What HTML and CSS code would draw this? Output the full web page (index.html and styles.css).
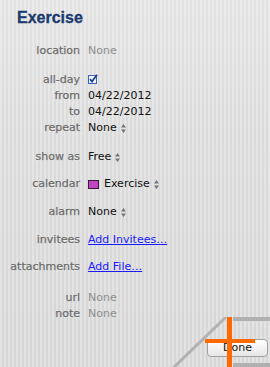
FILE: index.html
```
<!DOCTYPE html>
<html>
<head>
<meta charset="utf-8">
<link rel="stylesheet" href="styles.css">
</head>
<body>
<div class="panel">
  <h1 class="title">Exercise</h1>
  <div class="rows">
    <div class="row"><span class="label">location</span><span class="value muted">None</span></div>
    <div class="row sp13"><span class="label">all-day</span><span class="value"><svg class="check" width="10" height="10" viewBox="0 0 10 10"><rect x="0.5" y="1.5" width="8" height="8" fill="#eef3fb" stroke="#3d64b8"/><path d="M2 5.2 L4 7.6 L9 0.8" fill="none" stroke="#1d3f9a" stroke-width="1.8"/></svg></span></div>
    <div class="row"><span class="label">from</span><span class="value">04/22/2012</span></div>
    <div class="row"><span class="label">to</span><span class="value">04/22/2012</span></div>
    <div class="row"><span class="label">repeat</span><span class="value">None<svg class="step" width="5" height="9" viewBox="0 0 5 9"><path d="M2.5 0 L5 3.5 L0 3.5 Z M2.5 9 L5 5.5 L0 5.5 Z" fill="#777"/></svg></span></div>
    <div class="row sp13"><span class="label">show as</span><span class="value">Free<svg class="step" width="5" height="9" viewBox="0 0 5 9"><path d="M2.5 0 L5 3.5 L0 3.5 Z M2.5 9 L5 5.5 L0 5.5 Z" fill="#777"/></svg></span></div>
    <div class="row sp11"><span class="label">calendar</span><span class="value"><span class="swatch"></span>Exercise<svg class="step" width="5" height="9" viewBox="0 0 5 9"><path d="M2.5 0 L5 3.5 L0 3.5 Z M2.5 9 L5 5.5 L0 5.5 Z" fill="#777"/></svg></span></div>
    <div class="row sp12"><span class="label">alarm</span><span class="value">None<svg class="step" width="5" height="9" viewBox="0 0 5 9"><path d="M2.5 0 L5 3.5 L0 3.5 Z M2.5 9 L5 5.5 L0 5.5 Z" fill="#777"/></svg></span></div>
    <div class="row sp12"><span class="label">invitees</span><span class="value"><a class="link" href="#">Add Invitees…</a></span></div>
    <div class="row sp11"><span class="label">attachments</span><span class="value"><a class="link" href="#">Add File…</a></span></div>
    <div class="row sp15"><span class="label">url</span><span class="value muted">None</span></div>
    <div class="row"><span class="label">note</span><span class="value muted">None</span></div>
  </div>
</div>
<svg class="corner" width="100" height="52" viewBox="0 0 100 52">
  <line x1="56" y1="0" x2="0" y2="54" stroke="#b2b2b2" stroke-width="3"/>
  <rect x="63" y="0" width="37" height="4" fill="#b0b0b0"/>
  <rect x="63" y="46" width="37" height="6" fill="#b0b0b0"/>
</svg>
<button class="done">Done</button>
<svg class="cross" width="52" height="52" viewBox="0 0 52 52">
  <rect x="22" y="0" width="5" height="52" fill="#ff6a00"/>
  <rect x="0" y="22" width="50" height="4" fill="#ff6a00"/>
</svg>
</body>
</html>
```
FILE: styles.css
```
html, body {
  margin: 0;
  padding: 0;
}
body {
  width: 270px;
  height: 367px;
  overflow: hidden;
  position: relative;
  font-family: "DejaVu Sans", "Liberation Sans", sans-serif;
  font-size: 11px;
  background:
    repeating-linear-gradient(90deg, rgba(255,255,255,0.22) 0 2px, rgba(0,0,0,0.02) 2px 4px),
    linear-gradient(180deg, #e6e6e6 0%, #dedede 40%, #dadada 100%);
}
.panel {
  padding: 8px 0 0 0;
}
.title {
  margin: 0 0 0 17px;
  height: 20px;
  line-height: 20px;
  font-family: "Liberation Sans", Arial, sans-serif;
  font-weight: bold;
  font-size: 16px;
  color: #1a3a6e;
  -webkit-text-stroke: 0.3px #1a3a6e;
}
.rows {
  margin-top: 15px;
  display: flex;
  flex-direction: column;
}
.row {
  display: flex;
  align-items: center;
  height: 16px;
  line-height: 16px;
}
.sp11 { margin-top: 11px; }
.sp12 { margin-top: 12px; }
.sp13 { margin-top: 13px; }
.sp15 { margin-top: 15px; }
.label {
  width: 80px;
  text-align: right;
  color: #6c6c6c;
  -webkit-text-stroke: 0.25px #6c6c6c;
  text-shadow: 0 1px 0 rgba(255,255,255,0.5);
  flex: none;
}
.value {
  margin-left: 8px;
  display: flex;
  align-items: center;
  color: #111;
}
.muted {
  color: #8e8e8e;
}
.check {
  display: block;
  margin-top: -2px;
}
.step {
  display: block;
  margin-left: 4px;
}
.swatch {
  width: 9px;
  height: 7px;
  background: #c245c2;
  border: 1px solid #3a1a3a;
  margin-right: 5px;
}
.link {
  color: #1a1aff;
  text-decoration: underline;
}
.corner {
  position: absolute;
  left: 170px;
  top: 317px;
}
.done {
  position: absolute;
  left: 207px;
  top: 339px;
  width: 61px;
  height: 18px;
  padding: 0;
  border: 1px solid #a2a2a2;
  border-radius: 4px;
  background: linear-gradient(180deg, #ffffff 0%, #f3f3f3 50%, #e6e6e6 100%);
  font-family: "DejaVu Sans", "Liberation Sans", sans-serif;
  font-size: 11px;
  color: #111;
  line-height: 16px;
}
.cross {
  position: absolute;
  left: 205px;
  top: 317px;
}
```
